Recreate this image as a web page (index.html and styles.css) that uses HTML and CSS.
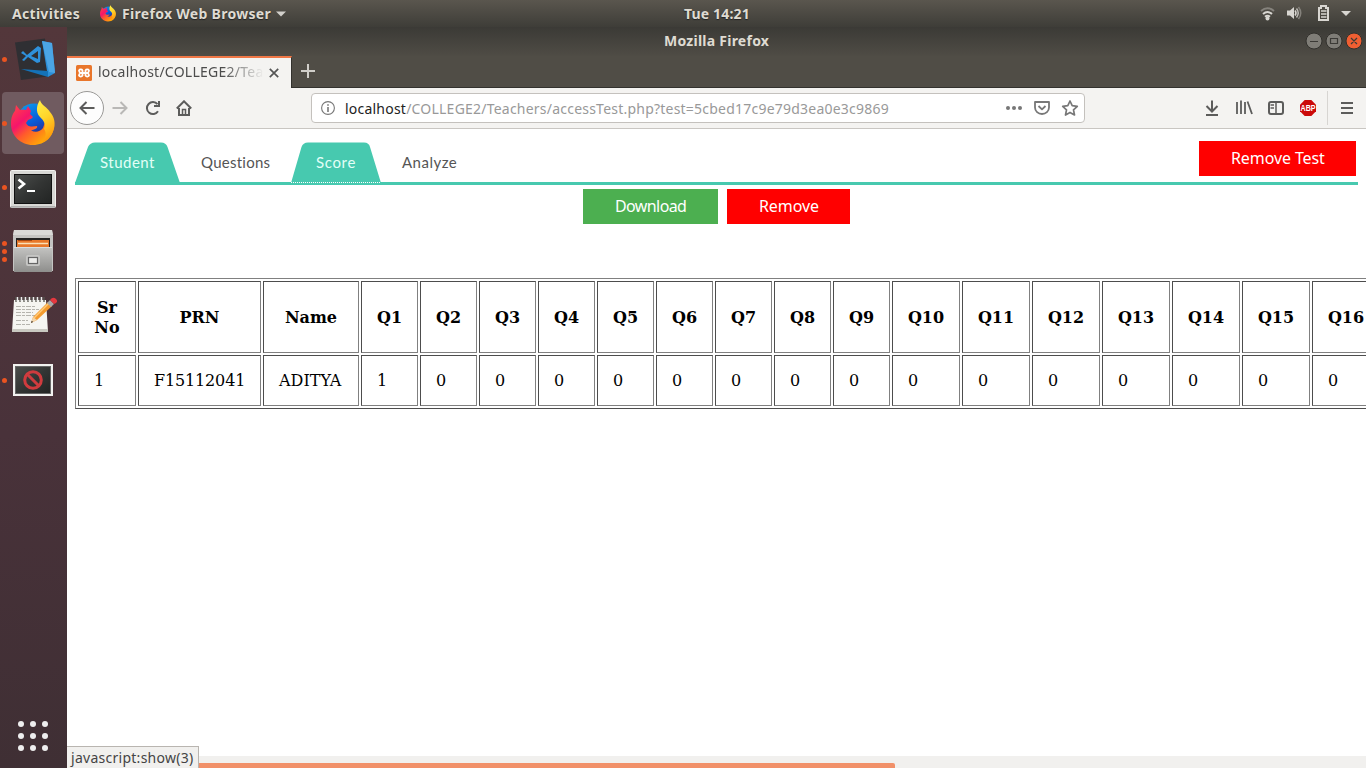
FILE: index.html
```html
<!DOCTYPE html>
<html lang="en">
<head>
<meta charset="utf-8">
<title>Mozilla Firefox</title>
<link rel="stylesheet" href="styles.css">
</head>
<body>
<svg class="defs" width="0" height="0">
  <defs>
    <linearGradient id="ffBody" x1="0.1" y1="0.1" x2="0.85" y2="0.9"><stop offset="0" stop-color="#ff3750"/><stop offset=".3" stop-color="#f5156c"/><stop offset=".55" stop-color="#ff5a2c"/><stop offset="1" stop-color="#ffb400"/></linearGradient>
    <linearGradient id="ffTail" x1="0" y1="0" x2="0.3" y2="1"><stop offset="0" stop-color="#fff04a"/><stop offset=".5" stop-color="#ffd52a"/><stop offset="1" stop-color="#ff9a0c"/></linearGradient>
    <linearGradient id="ffBlue" x1="0" y1="0" x2="0.5" y2="1"><stop offset="0" stop-color="#0aa5f0"/><stop offset=".6" stop-color="#0a5bd8"/><stop offset="1" stop-color="#2a2a90"/></linearGradient>
    <linearGradient id="metal" x1="0" y1="0" x2="0" y2="1"><stop offset="0" stop-color="#c4c4c2"/><stop offset="1" stop-color="#8e8e8c"/></linearGradient>
    <linearGradient id="screen" x1="0" y1="0" x2="1" y2="1"><stop offset="0" stop-color="#4b4e4c"/><stop offset=".5" stop-color="#333534"/><stop offset="1" stop-color="#222423"/></linearGradient>
    <symbol id="firefox" viewBox="0 0 44 46">
      <circle cx="23" cy="21" r="17.500" fill="url(#ffBlue)"/>
      <path d="M5 5 9 10Q12 9 15 10L17 6 20 11 19 14 22 17Q21 19 17 20L15 23Q17 27 21 26.500L26 26Q27 28 23 29.500L20 30.500Q27 34 32 28L34 22 39 14 43 23C44 36 34 45 22 45 9 45 0 35 0 24 0 17 2 13 4 11Z" fill="url(#ffBody)"/>
      <path d="M29 0C30 5 36 7 39 12 43 17 44 21 43.500 26 42 36 36 41 30 43 35 38 36 33 33 29 35 24 33 21 29 17 24 12 26 4 29 0Z" fill="url(#ffTail)"/>
    </symbol>
  </defs>
</svg>

<header class="panel">
  <span class="activities">Activities</span>
  <svg class="panel-fox" width="16" height="17"><use href="#firefox"/></svg>
  <span class="app-name">Firefox Web Browser</span>
  <svg class="app-arrow" width="10" height="6"><path d="M0 .5H10L5 5.500Z" fill="#d2d0cb"/></svg>
  <span class="clock">Tue 14:21</span>
  <svg class="tray" width="106" height="20" viewBox="0 0 106 20">
    <g fill="none" stroke-width="2"><path d="M1 8Q7.500 2.500 14 8" stroke="#85827c"/><path d="M3 11Q7.500 7 12 11" stroke="#d8d6d1"/><path d="M5 13.800Q7.500 11.800 10 13.800" stroke="#d8d6d1"/></g>
    <circle cx="7.500" cy="15.500" r="2" fill="#d8d6d1"/>
    <path d="M27 7.500H30L34 4V16L30 12.500H27Z" fill="#d8d6d1"/>
    <g fill="none" stroke-width="1.500"><path d="M35 7.500Q37 10 35 12.500" stroke="#d8d6d1"/><path d="M36.500 5.500Q40 10 36.500 14.500" stroke="#bdbbb6"/><path d="M38.500 4Q43 10 38.500 16" stroke="#85827c"/></g>
    <path d="M61 3H66V5H68V17H59V5H61Z" fill="none" stroke="#d8d6d1" stroke-width="2"/>
    <path d="M61 8H66.500M61 11H66.500M61 14H66.500" stroke="#d8d6d1" stroke-width="1.500"/>
    <path d="M81 8H91L86 13Z" fill="#d8d6d1"/>
  </svg>
</header>

<div class="desktop">
  <nav class="dock">
    <div class="dock-item code"><span class="pips"><i></i></span>
      <svg width="42" height="44" viewBox="0 0 42 44"><path d="M1 4.500 31 .5 37 38 7 42Z" fill="#2f2f33"/><path d="M28 3 38 5 41 35 34 39Z" fill="#2b8fd8"/><path d="M28 3 38 5 41 35 35 34Z" fill="#4ba5e5"/><path d="M7 31 34 33V39Z" fill="#1472b8"/><path d="M7 15 9 13 13 17 24 8 27 10 26 24 23 25 14 19 10 23 8 22 12 18ZM24 13 17 18 24 21Z" fill="#2e91dc" fill-rule="evenodd"/></svg>
    </div>
    <div class="dock-item fox"><span class="pips"><i></i></span>
      <svg width="44" height="46"><use href="#firefox"/></svg>
    </div>
    <div class="dock-item term"><span class="pips"><i></i></span>
      <svg width="46" height="38" viewBox="0 0 46 38"><rect x=".5" y=".5" width="45" height="37" rx="1" fill="#d8d8d5" stroke="#f1f1ef"/><path d="M1 37H45" stroke="#888"/><rect x="4" y="4" width="38" height="30" fill="#111"/><rect x="5" y="5" width="36" height="28" fill="url(#screen)"/><path d="M8.500 9.500 14 14 8.500 18.500" fill="none" stroke="#fff" stroke-width="2.600"/><path d="M17 21H25" stroke="#fff" stroke-width="2"/></svg>
    </div>
    <div class="dock-item files"><span class="pips"><i></i><i></i><i></i></span>
      <svg width="42" height="44" viewBox="0 0 42 44"><path d="M2 1H40L41 7V42H1V7Z" fill="#c4c4c2"/><path d="M2 1H40L41 6H1Z" fill="#d9d9d7"/><rect x="4" y="9" width="34" height="9" fill="#222"/><path d="M5 11H37V18H5Z" fill="#e8782a"/><path d="M6 11.500H20" stroke="#a8480f"/><path d="M6 14.500H36" stroke="#fbe0b6" stroke-width="1.500"/><path d="M2 18H40V43H2Z" fill="url(#metal)"/><path d="M2 18.500H40" stroke="#ddd"/><rect x="14" y="26" width="14" height="11" rx="2" fill="#c6c6c4"/><rect x="16.500" y="28.500" width="9" height="6" fill="#ececea" stroke="#666" stroke-width="1.200"/></svg>
    </div>
    <div class="dock-item notes"><span class="pips"></span>
      <svg width="46" height="38" viewBox="0 0 46 38"><path d="M3 4H35L37 36H1Z" fill="#f5f5f1"/><path d="M1 33H37V36H1Z" fill="#c9c9c1"/><path d="M5 1V6M9 1V6M13 1V6M17 1V6M21 1V6M25 1V6M29 1V6M33 1V6" stroke="#55544f" stroke-width="1.300"/><path d="M6.500 1V5M10.500 1V5M14.500 1V5M18.500 1V5M22.500 1V5M26.500 1V5M30.500 1V5" stroke="#eee" stroke-width="1.500"/><path d="M5 10.500H24M5 13.500H28M5 16.500H22M5 19.500H24M5 24.500H17M5 28.500H19" stroke="#b5b4ae" stroke-dasharray="5 1 3 1"/><path d="M20 27 22 21 37 6 41 10 26 24Z" fill="#f49b2f"/><path d="M23 22 38 7" stroke="#ffcb7a" stroke-width="1.500"/><path d="M20 27 22 21 26 24Z" fill="#f1d5ac"/><path d="M20 27 20.800 24.800 22 26Z" fill="#222"/><path d="M36 7 39 4 43 8 40 11Z" fill="#a8a8a8"/><path d="M39 4Q42 0 45 3T43 8Z" fill="#e5383f"/></svg>
    </div>
    <div class="dock-item blocked"><span class="pips"><i></i></span>
      <svg width="40" height="32" viewBox="0 0 40 32"><rect width="40" height="32" fill="#f2f2f0"/><rect x="2.500" y="2.500" width="35" height="27" fill="url(#screen)" stroke="#666"/><circle cx="20" cy="16" r="8.300" fill="none" stroke="#cf3b3e" stroke-width="3"/><path d="M14.500 10.500 25.500 21.500" stroke="#cf3b3e" stroke-width="3"/></svg>
    </div>
    <svg class="apps-grid" width="32" height="32" viewBox="0 0 32 32" fill="#eee"><circle cx="4" cy="4" r="3"/><circle cx="16" cy="4" r="3"/><circle cx="28" cy="4" r="3"/><circle cx="4" cy="16" r="3"/><circle cx="16" cy="16" r="3"/><circle cx="28" cy="16" r="3"/><circle cx="4" cy="28" r="3"/><circle cx="16" cy="28" r="3"/><circle cx="28" cy="28" r="3"/></svg>
  </nav>

  <main class="window">
    <div class="titlebar">
      <span class="window-title">Mozilla Firefox</span>
      <svg class="window-buttons" width="57" height="18" viewBox="0 0 57 18"><g stroke="#32312d"><circle cx="9" cy="9" r="8" fill="#7f7d77"/><circle cx="29" cy="9" r="8" fill="#7f7d77"/><circle cx="49" cy="9" r="8" fill="#f05f32"/></g><path d="M5 9.500H13M25.500 6.500H32.500V11.500H25.500ZM46 6 52 12M52 6 46 12" fill="none" stroke="#3b3a36" stroke-width="1.200"/></svg>
    </div>
    <div class="tabstrip">
      <div class="browser-tab">
        <svg width="16" height="16" viewBox="0 0 16 16"><rect width="16" height="16" rx="1.500" fill="#e9762b"/><path d="M5 8H11M6.500 8V5.500A2 2 0 0 0 3 5.500Q3 7 4.500 8 3 9 3 10.500A2 2 0 0 0 6.500 10.500V8M9.500 8V5.500A2 2 0 0 1 13 5.500Q13 7 11.500 8 13 9 13 10.500A2 2 0 0 1 9.500 10.500V8" fill="none" stroke="#fff" stroke-width="1.800"/></svg>
        <span class="tab-title">localhost/COLLEGE2/Tea</span>
        <svg class="tab-close" width="10" height="10"><path d="M.8.8 9.200 9.200M9.200.8.8 9.200" stroke="#555" stroke-width="1.700"/></svg>
      </div>
      <svg class="new-tab" width="14" height="14"><path d="M7 0V14M0 7H14" stroke="#d0cec9" stroke-width="2"/></svg>
    </div>
    <div class="toolbar">
      <span class="back"><svg width="16" height="14" viewBox="0 0 16 14"><path d="M15.500 7H1.500M7.500 1 1.500 7 7.500 13" fill="none" stroke="#5c5c5b" stroke-width="2"/></svg></span>
      <svg class="forward" width="16" height="14" viewBox="0 0 16 14"><path d="M.5 7H14.500M8.500 1 14.500 7 8.500 13" fill="none" stroke="#b9b8b6" stroke-width="2"/></svg>
      <svg class="reload" width="16" height="16" viewBox="0 0 16 16"><path d="M12.500 4.200A6 6 0 1 0 13 11.300" fill="none" stroke="#5c5c5b" stroke-width="2"/><path d="M14 1V6H9" fill="none" stroke="#5c5c5b" stroke-width="2"/></svg>
      <svg class="home" width="16" height="16" viewBox="0 0 16 16"><path d="M.8 8.500 8 1.300 15.200 8.500M3 8V15H13V8" fill="none" stroke="#5c5c5b" stroke-width="2"/><path d="M6.500 15V9.500H9.500V15" fill="none" stroke="#5c5c5b" stroke-width="1.500"/></svg>
      <div class="urlbar">
        <svg width="14" height="14" viewBox="0 0 14 14"><circle cx="7" cy="7" r="6.400" fill="none" stroke="#777" stroke-width="1.100"/><path d="M7 6V11M7 3.200V4.800" stroke="#777" stroke-width="1.600"/></svg>
        <span class="url"><b>localhost</b>/COLLEGE2/Teachers/accessTest.php?test=5cbed17c9e79d3ea0e3c9869</span>
        <svg class="url-icons" width="74" height="18" viewBox="0 0 74 18"><g fill="#777"><circle cx="3" cy="9" r="2"/><circle cx="9" cy="9" r="2"/><circle cx="15" cy="9" r="2"/></g><path d="M30 3H44V8.500A7 6.500 0 0 1 30 8.500ZM33.500 7 37 10.300 40.500 7" fill="none" stroke="#777" stroke-width="1.800" stroke-linejoin="round"/><path d="M65 2 67.200 6.700 72.300 7.300 68.500 10.800 69.500 16 65 13.400 60.500 16 61.500 10.800 57.700 7.300 62.800 6.700Z" fill="none" stroke="#777" stroke-width="1.700" stroke-linejoin="round"/></svg>
      </div>
      <svg class="actions" width="156" height="34" viewBox="0 0 156 34"><g fill="none" stroke="#5c5c5b" stroke-width="2"><path d="M12 9.500V20M6.500 15 12 20.500 17.500 15M6 24H18"/><path d="M37 11V23M41 9.500V23M45 11V23M47.500 10.500 52 23" stroke-width="1.800"/><rect x="69" y="11" width="14" height="12" rx="2"/><path d="M76 11V23M70.500 14H74M70.500 17H74" stroke-width="1.500"/><path d="M141 12H153M141 17H153M141 22H153"/></g><path d="M127.500 0V34" stroke="#d7d5d2"/><path d="M104.700 9H111.300L116 13.700V20.300L111.300 25H104.700L100 20.300V13.700Z" fill="#cb0a0a"/><text x="100.500" y="20.200" textLength="15" lengthAdjust="spacingAndGlyphs" class="abp">ABP</text></svg>
    </div>

    <section class="page">
      <ul class="page-tabs">
        <li class="tab active student"><svg width="105" height="41"><path d="M0 41 13 5Q15 .5 20 .5H86Q91 .5 92.500 5L105 41Z"/></svg><span>Student</span></li>
        <li class="tab questions"><span>Questions</span></li>
        <li class="tab active score"><svg width="90" height="41"><path d="M0 41 10.500 5Q12 .5 17 .5H73Q78 .5 79 5L90 41Z"/><path class="focus-line" d="M0 40.500H90"/></svg><span>Score</span></li>
        <li class="tab analyze"><span>Analyze</span></li>
        <li class="remove-test"><button class="btn red">Remove Test</button></li>
      </ul>
      <div class="buttons"><button class="btn green">Download</button><button class="btn red remove">Remove</button></div>
      <table class="scores">
        <colgroup><col class="c-sr"><col class="c-prn"><col class="c-name"><col class="c-q" span="9"><col class="c-qq" span="7"></colgroup>
        <tr><th>Sr No</th><th>PRN</th><th>Name</th><th>Q1</th><th>Q2</th><th>Q3</th><th>Q4</th><th>Q5</th><th>Q6</th><th>Q7</th><th>Q8</th><th>Q9</th><th>Q10</th><th>Q11</th><th>Q12</th><th>Q13</th><th>Q14</th><th>Q15</th><th>Q16</th></tr>
        <tr><td>1</td><td class="prn">F15112041</td><td>ADITYA</td><td>1</td><td>0</td><td>0</td><td>0</td><td>0</td><td>0</td><td>0</td><td>0</td><td>0</td><td>0</td><td>0</td><td>0</td><td>0</td><td>0</td><td>0</td><td>0</td></tr>
      </table>
    </section>
    <div class="scrollbar"><div class="thumb"></div></div>
    <div class="status"><span>javascript:show(3)</span></div>
  </main>
</div>
</body>
</html>
```
FILE: styles.css
```css
* { box-sizing: border-box; }
body { margin: 0; width: 1366px; height: 768px; overflow: hidden; display: flex; flex-direction: column; font-family: "Noto Sans", sans-serif; font-size: 14px; white-space: nowrap; }
svg { display: block; flex: none; }
.defs { position: absolute; }

.panel { height: 27px; flex: none; display: flex; align-items: center; background: linear-gradient(#5a564e, #3e3d38); color: #dfdbd2; font-weight: 700; letter-spacing: .3px; text-shadow: 0 1px 1px #222; }
.activities { width: 68px; margin-left: 12px; }
.panel-fox { margin-left: 20px; }
.app-name { width: 149px; margin-left: 6px; }
.app-arrow { margin-left: 5px; }
.clock { margin-left: 398px; width: 66px; letter-spacing: .15px; }
.panel span { padding-bottom: 1px; }
.tray { margin: 0 0 1px auto; }

.desktop { flex: 1; display: flex; min-height: 0; }
.dock { width: 67px; flex: none; display: flex; flex-direction: column; background: linear-gradient(#53373b, #49323a 55%, #3f2f34); }
.dock-item { display: flex; align-items: center; margin-left: 2px; width: 62px; height: 62px; border-radius: 4px; flex: none; }
.pips { width: 5px; display: flex; flex-direction: column; gap: 3px; flex: none; }
.pips i { width: 5px; height: 5px; border-radius: 50%; background: #ea5421; }
.code { margin-top: 1px; }
.code svg { margin-left: 7px; margin-top: 2px; }
.fox { margin-top: 2px; background: #705b60; }
.fox svg { margin-left: 4px; margin-bottom: 1px; }
.term { margin-top: 2px; }
.term svg { margin-left: 3px; margin-top: 4px; }
.files { margin-top: 2px; }
.files svg { margin-left: 5px; }
.notes { margin-top: 2px; }
.notes svg { margin-left: 4px; }
.blocked { margin-top: 3px; }
.blocked svg { margin-left: 6px; }
.apps-grid { margin: auto 0 16px 17px; }

.window { flex: 1; min-width: 0; display: flex; flex-direction: column; position: relative; background: #fff; }
.titlebar { height: 29px; flex: none; display: flex; align-items: center; padding-bottom: 1px; background: linear-gradient(#3b3a36, #4f4c45); color: #dfdbd2; font-weight: 700; letter-spacing: .25px; }
.window-title { margin-left: 597px; width: 106px; padding-bottom: 2px; }
.window-buttons { margin-left: auto; margin-right: 4px; }
.tabstrip { height: 32px; flex: none; display: flex; background: #504d46; border-bottom: 1px solid #33322e; }
.browser-tab { width: 225px; height: 32px; display: flex; align-items: center; padding: 0 0 1px 9px; background: #f4f3f1; border-top: 2px solid #f07746; border-right: 1px solid #33322e; color: #4c4c4c; }
.tab-title { margin-left: 6px; width: 166px; padding-bottom: 2px; overflow: hidden; letter-spacing: .25px; -webkit-mask-image: linear-gradient(90deg, #000 75%, transparent); mask-image: linear-gradient(90deg, #000 75%, transparent); }
.tab-close { margin-left: 5px; }
.new-tab { margin: 8px 0 0 9px; }
.toolbar { height: 41px; flex: none; display: flex; align-items: center; background: #f4f3f1; border-bottom: 1px solid #c9c6c2; }
.back { width: 34px; height: 34px; margin-left: 3px; border: 1px solid #9a9997; border-radius: 50%; background: #fdfdfd; display: flex; align-items: center; justify-content: center; }
.forward { margin-left: 8px; }
.reload { margin-left: 17px; }
.home { margin-left: 15px; }
.urlbar { width: 774px; height: 30px; margin-left: 119px; display: flex; align-items: center; padding-left: 9px; background: #fff; border: 1px solid #c4c1bd; border-radius: 4px; color: #999; }
.url { margin-left: 10px; width: 660px; letter-spacing: .22px; }
.url b { font-weight: 400; color: #222; }
.actions { margin-left: 115px; }
.abp { font: bold 9px "Liberation Sans", sans-serif; fill: #fff; }

.page { flex: 1; min-height: 0; padding: 12px 8px 0; overflow: hidden; }
.page-tabs { margin: 0; padding: 1px 0 0; height: 44px; border-bottom: 3px solid #47c9af; list-style: none; display: flex; font: 15px Lato, sans-serif; color: #555; letter-spacing: .5px; }
.tab { position: relative; height: 40px; line-height: 41px; }
.tab svg { position: absolute; left: 0; top: 0; fill: #47c9af; }
.focus-line { stroke: #fff; stroke-dasharray: 1 1; }
.tab span { position: relative; }
.active { color: #e3fff7; }
.student { width: 105px; padding-left: 25px; }
.questions { width: 111px; padding-left: 21px; letter-spacing: .25px; }
.score { width: 90px; padding-left: 25px; letter-spacing: .65px; }
.analyze { padding-left: 21px; }
.remove-test { margin: -1px 2px 0 auto; }
.btn { display: block; height: 35px; border: 0; padding: 0 0 2px 32px; color: #fff; text-align: left; font: 16px "Noto Sans", sans-serif; letter-spacing: -.1px; background: #f00; }
.remove-test .btn { width: 157px; }
.btn.green { width: 135px; background: #4caf50; letter-spacing: -.6px; }
.remove { width: 123px; }
.buttons { display: flex; gap: 9px; margin: 4px 0 54px 508px; }
.scores { table-layout: fixed; width: 1308px; border: 1px solid; border-color: #808080 #4d4d4d #4d4d4d #808080; border-spacing: 2px; font: 16px/20px "DejaVu Serif", serif; color: #000; }
.scores th, .scores td { border: 1px solid; border-color: #4d4d4d #808080 #808080 #4d4d4d; padding: 15px; text-align: left; }
.scores th { padding: 16px 14px 14px; text-align: center; white-space: normal; height: 72px; }
.scores td { line-height: 19px; height: 51px; }
.scores .prn { letter-spacing: -.15px; }
.c-sr { width: 58px; }
.c-prn { width: 123px; }
.c-name { width: 96px; }
.c-q { width: 57px; }
.c-qq { width: 68px; }
.scrollbar { height: 12px; flex: none; background: #f1f0ee; padding-top: 7px; }
.thumb { width: 828px; height: 5px; background: #f19069; border-radius: 0 2px 0 0; }
.status { position: absolute; left: 0; bottom: 0; width: 132px; height: 22px; padding-left: 4px; line-height: 21px; background: #f1f0ee; border: 1px solid #b9b5b0; border-width: 1px 1px 0 0; color: #444; letter-spacing: .27px; }
```
